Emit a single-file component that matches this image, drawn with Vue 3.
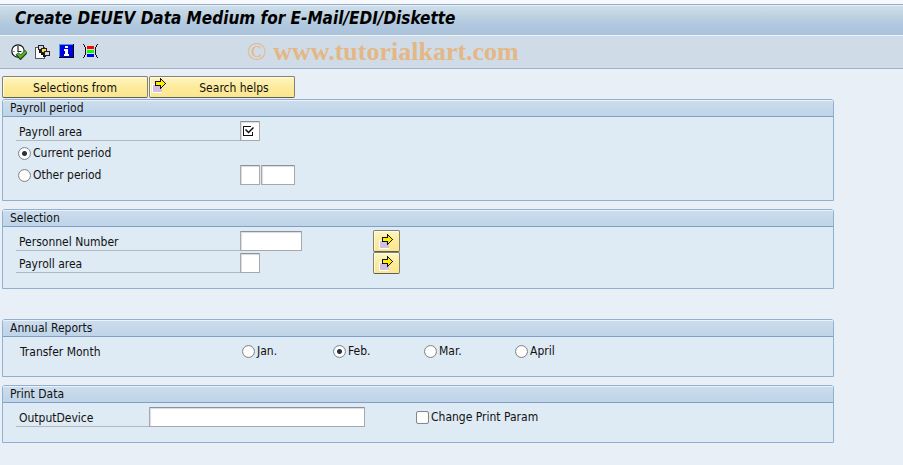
<template>
  <div class="screen">
    <header class="title-bar">
      <h1>Create DEUEV Data Medium for E-Mail/EDI/Diskette</h1>
    </header>

    <div class="toolbar">
      <button type="button" class="tool" aria-label="Execute">
        <svg viewBox="0 0 16 16" width="16" height="16">
          <circle cx="7" cy="7" r="6.200" fill="#fff" stroke="#111" stroke-width="1.200" />
          <path d="M7 2v5.500h3.500M2.500 7.500h1M7 11v1" fill="none" stroke="#222" stroke-width="1.200" />
          <path d="M6 9.500l3.500 4L15.500 7.500" fill="none" stroke="#1d4a10" stroke-width="4" />
          <path d="M6.500 9.500l3 3.500L15 7.500" fill="none" stroke="#5fb030" stroke-width="2.200" />
        </svg>
      </button>
      <button type="button" class="tool" aria-label="Get variant">
        <svg viewBox="0 0 16 16" width="16" height="16" shape-rendering="crispEdges">
          <path d="M.5 3.500h9v11h-9z" fill="#fff" stroke="#555" />
          <path d="M3.500 1.500h5v4h-5z" fill="#d8d4e8" stroke="#222" />
          <path d="M4 6h2v2h3v3h2v2H8v-2H6V9H4z" fill="#111" />
          <path d="M6.500 4.500h5v4h-5z" fill="#ffe13a" stroke="#222" />
          <path d="M9.500 7.500h5v4h-5z" fill="#d8d4e8" stroke="#222" />
        </svg>
      </button>
      <button type="button" class="tool" aria-label="Information">
        <svg viewBox="0 0 16 16" width="16" height="16" shape-rendering="crispEdges">
          <path d="M0 0h15v14H0z" fill="#000" />
          <path d="M0 0h14v1H1v12H0z" fill="#3fa7d8" />
          <path d="M1 1h13v12H1z" fill="#0000e6" />
          <path d="M6 2h3v2H6zM5 5h4v5h1v2H5v-2h1V7H5z" fill="#fff" />
        </svg>
      </button>
      <button type="button" class="tool" aria-label="Dynamic selections">
        <svg viewBox="0 0 16 16" width="16" height="16" shape-rendering="crispEdges">
          <path d="M0 0h1v1h1v2h1v8H2v2H1v1H0v-1h1v-2h1V3H1V1H0zM15 0h-1v1h-1v2h-1v8h1v2h1v1h1v-1h-1v-2h-1V3h1V1h1z" fill="#111" />
          <path d="M4 2h7v3H4z" fill="#f00" />
          <path d="M4 6h7v3H4z" fill="#0f0" />
          <path d="M4 10h7v3H4z" fill="#00f" />
        </svg>
      </button>
      <p class="watermark"><span>©</span> www.tutorialkart.com</p>
    </div>

    <main class="content">
      <div class="actions">
        <button type="button" class="push">Selections from</button>
        <button type="button" class="push with-icon">
          <svg viewBox="0 0 16 16" width="16" height="16" shape-rendering="crispEdges">
            <path d="M0 6h10v9H0z" fill="#fff" />
            <path d="M1 7h9v7H1z" fill="#d3bfe0" />
            <path d="M3 3h5V0h1v1h1v1h1v1h1v1h1v1h1v1h-1v1h-1v1h-1v1h-1v1h-1v1H8V8H3z" fill="#111" />
            <path d="M4 4h5V2h1v1h1v1h1v1h1v1h-1v1h-1v1h-1v1h-1V7H4z" fill="#fe0" />
          </svg>
          <span>Search helps</span>
        </button>
      </div>

      <section class="group">
        <h2>Payroll period</h2>
        <div class="rows">
          <div class="row">
            <label class="caption" for="period-area">Payroll area</label>
            <span class="required">
              <input id="period-area" v-model="periodArea" type="text" class="field w2">
              <svg v-if="!periodArea" viewBox="0 0 12 12" width="12" height="12">
                <path d="M9 1.500H1.500v9h9V7" fill="none" stroke="#111" shape-rendering="crispEdges" />
                <path d="M3.500 4.500l3 3L11.500 2.500" fill="none" stroke="#111" stroke-width="1.500" />
              </svg>
            </span>
          </div>
          <div class="row">
            <label class="choice">
              <input v-model="period" type="radio" name="period" value="current">Current period
            </label>
          </div>
          <div class="row">
            <label class="choice">
              <input v-model="period" type="radio" name="period" value="other">Other period
            </label>
            <span class="pair">
              <input type="text" class="field w2" aria-label="Period">
              <input type="text" class="field w4" aria-label="Year">
            </span>
          </div>
        </div>
      </section>

      <section class="group">
        <h2>Selection</h2>
        <div class="rows">
          <div v-for="item in selections" :key="item.id" class="row">
            <label class="caption" :for="item.id">{{ item.label }}</label>
            <input :id="item.id" type="text" class="field" :class="item.size">
            <button type="button" class="push more" :aria-label="'Multiple selection: ' + item.label">
              <svg viewBox="0 0 16 16" width="16" height="16" shape-rendering="crispEdges">
                <path d="M0 6h10v9H0z" fill="#fff" />
                <path d="M1 7h9v7H1z" fill="#d3bfe0" />
                <path d="M3 3h5V0h1v1h1v1h1v1h1v1h1v1h1v1h-1v1h-1v1h-1v1h-1v1h-1v1H8V8H3z" fill="#111" />
                <path d="M4 4h5V2h1v1h1v1h1v1h1v1h-1v1h-1v1h-1v1h-1V7H4z" fill="#fe0" />
              </svg>
            </button>
          </div>
        </div>
      </section>

      <section class="group spaced">
        <h2>Annual Reports</h2>
        <div class="rows">
          <div class="row" role="radiogroup" aria-labelledby="transfer-month">
            <span id="transfer-month" class="caption plain">Transfer Month</span>
            <div class="months">
              <label v-for="m in months" :key="m" class="choice">
                <input v-model="month" type="radio" name="month" :value="m">{{ m }}
              </label>
            </div>
          </div>
        </div>
      </section>

      <section class="group">
        <h2>Print Data</h2>
        <div class="rows">
          <div class="row print">
            <label class="caption" for="output-device">OutputDevice</label>
            <input id="output-device" type="text" class="field w30">
            <label class="choice tick">
              <input v-model="changeParams" type="checkbox">Change Print Param
            </label>
          </div>
        </div>
      </section>
    </main>
  </div>
</template>

<script setup>
import { ref } from 'vue'

const periodArea = ref('')
const period = ref('current')
const month = ref('Feb.')
const changeParams = ref(false)

const months = ['Jan.', 'Feb.', 'Mar.', 'April']

const selections = [
  { id: 'personnel-number', label: 'Personnel Number', size: 'w8' },
  { id: 'selection-area', label: 'Payroll area', size: 'w2' }
]
</script>

<style>
body {
  margin: 0;
  background: #e8eff7;
}
</style>

<style scoped>
.screen {
  min-height: 100vh;
  box-sizing: border-box;
  border-top: 4px solid #f5f8fd;
  background: #e8eff7;
  color: #111;
  font-family: "DejaVu Sans Condensed", "DejaVu Sans", Tahoma, sans-serif;
  font-size: 12px;
  line-height: 16px;
}

.title-bar {
  border-top: 1px solid #96abc6;
  border-bottom: 1px solid #eef5fc;
  box-shadow: inset 0 1px #e6f0f8;
  background: linear-gradient(#d0e0ec, #bfd2e0 35%, #b0c8df 65%, #abc2dc);
}

.title-bar h1 {
  margin: 0;
  padding: 3px 15px 6px;
  font-size: 17px;
  line-height: 21px;
  font-style: italic;
  font-weight: bold;
  color: #000;
}

.toolbar {
  display: flex;
  align-items: center;
  gap: 8px;
  height: 32px;
  padding: 0 11px;
  border-bottom: 1px solid #9fb1cb;
  background: #cfdce7;
}

.tool {
  display: flex;
  padding: 0;
  border: 0;
  background: none;
}

.watermark {
  margin: 0 0 0 140px;
  font-family: "Liberation Serif", "Times New Roman", serif;
  font-size: 26px;
  line-height: 32px;
  font-weight: bold;
  color: #e4b786;
}

.watermark span {
  font-weight: normal;
}

.content {
  padding: 7px 69px 0 2px;
}

.actions {
  display: flex;
  gap: 1px;
  margin-bottom: 1px;
}

.push {
  display: flex;
  align-items: center;
  justify-content: center;
  box-sizing: border-box;
  width: 146px;
  height: 22px;
  padding: 1px 2px 0;
  border: 1px solid #84816f;
  border-bottom-color: #5f5d52;
  border-radius: 2px;
  box-shadow: inset 1px 1px #fffbe0;
  background: linear-gradient(#fdf5c4, #fdeb9b 50%, #fbe690);
  color: #111;
  font: inherit;
}

.with-icon svg {
  align-self: flex-start;
}

.with-icon span {
  flex: 1;
  padding-left: 8px;
}

.more {
  width: 27px;
}

.group {
  margin-bottom: 8px;
  border: 1px solid #8fb0d0;
  border-radius: 3px 3px 0 0;
  background: #deeaf4;
}

.group.spaced {
  margin-top: 30px;
}

.group h2 {
  margin: 0;
  padding: 0 7px;
  border-bottom: 1px solid #7f9fc5;
  border-radius: 2px 2px 0 0;
  box-shadow: inset 0 1px #eaf2fa;
  background: linear-gradient(#cddded, #bed4e8);
  font-size: 12px;
  line-height: 16px;
  font-weight: normal;
}

.rows {
  padding: 3px 13px 14px;
}

.row {
  display: grid;
  grid-template-columns: 224px 133px auto;
  align-items: center;
  justify-content: start;
  height: 22px;
}

.row.print {
  grid-template-columns: 133px 267px auto;
}

.caption {
  box-sizing: border-box;
  height: 20px;
  padding: 0 3px;
  border-bottom: 1px solid #b4b7bb;
  line-height: 22px;
}

.caption.plain {
  padding-left: 4px;
  border-bottom: 0;
}

.field {
  box-sizing: border-box;
  height: 20px;
  padding: 0 3px;
  border: 1px solid #a5a8ad;
  border-top-color: #8d9096;
  border-radius: 1px;
  box-shadow: inset 1px 1px 1px #d9dce2;
  background: #fff;
  font: inherit;
}

.w2 {
  width: 20px;
}

.w4 {
  width: 34px;
}

.w8 {
  width: 62px;
}

.w30 {
  width: 216px;
}

.required {
  position: relative;
  display: flex;
}

.required svg {
  position: absolute;
  top: 4px;
  left: 2px;
  pointer-events: none;
}

.pair {
  display: flex;
  gap: 1px;
}

.choice {
  display: flex;
  align-items: center;
  gap: 2px;
  padding-left: 2px;
  line-height: 18px;
  white-space: nowrap;
}

.choice.tick {
  padding-left: 0;
}

.choice input {
  appearance: none;
  box-sizing: border-box;
  width: 13px;
  height: 13px;
  margin: 0;
  border: 1px solid #85888c;
  background: #fff;
  box-shadow: inset 0 0 1px #b9bcc2;
}

.choice input[type="radio"] {
  border-radius: 50%;
}

.choice input[type="radio"]:checked {
  background: radial-gradient(circle, #2b2e45 2px, #fff 3px);
}

.choice input[type="checkbox"] {
  border-radius: 2px;
}

.choice input[type="checkbox"]:checked {
  box-shadow: inset 0 0 0 2px #fff;
  background: #2b2e45;
}

.months {
  display: grid;
  grid-template-columns: repeat(4, 91px);
}
</style>
